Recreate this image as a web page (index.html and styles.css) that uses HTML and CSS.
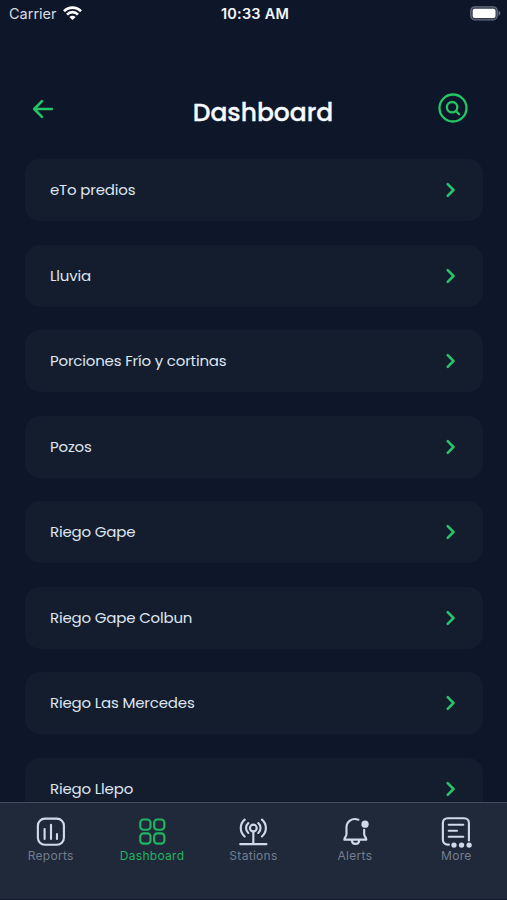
FILE: index.html
```html
<!DOCTYPE html>
<html lang="en">
<head>
<meta charset="utf-8">
<title>Dashboard</title>
<link rel="stylesheet" href="styles.css">
</head>
<body>
<div class="app">
  <div class="status">
    <div class="carrier"><span>Carrier</span>
      <svg width="19" height="14" viewBox="0 0 19 14" fill="none" stroke="#fff" stroke-width="2.7"><path d="M1 5.2C5.8.4 13.2.4 18 5.2M4 8.6c3.1-3.2 7.9-3.2 11 0"/><path d="M9.5 14 6.4 10.9c1.7-1.7 4.5-1.7 6.2 0z" fill="#fff" stroke="none"/></svg>
    </div>
    <div class="clock">10:33 AM</div>
    <svg class="battery" width="31" height="15" viewBox="0 0 31 15"><rect x=".8" y=".8" width="26.4" height="13" rx="4" fill="#30384a" stroke="#666c7b" stroke-width="1.3"/><rect x="2.7" y="2.7" width="22.8" height="9.2" rx="2" fill="#fff"/><path d="M28.5 4.8c2.5 1 2.5 4 0 5z" fill="#666c7b"/></svg>
  </div>
  <header class="header">
    <svg class="back" width="22" height="20" viewBox="0 0 22 20"><path d="M10 2.2 2.2 10l7.8 7.8M2.6 10h17.3"/></svg>
    <h1>Dashboard</h1>
    <svg class="search" width="30" height="30" viewBox="0 0 30 30"><circle cx="15" cy="15" r="13.5"/><circle cx="14.1" cy="14.2" r="5.2"/><path d="m17.9 18 3.2 3.2"/></svg>
  </header>
  <main class="list">
    <div class="card"><span>eTo predios</span><svg class="chevron" viewBox="0 0 10 16"><path d="m1.7 2.2 5.8 5.8-5.8 5.8"/></svg></div>
    <div class="card"><span>Lluvia</span><svg class="chevron" viewBox="0 0 10 16"><path d="m1.7 2.2 5.8 5.8-5.8 5.8"/></svg></div>
    <div class="card"><span>Porciones Frío y cortinas</span><svg class="chevron" viewBox="0 0 10 16"><path d="m1.7 2.2 5.8 5.8-5.8 5.8"/></svg></div>
    <div class="card"><span>Pozos</span><svg class="chevron" viewBox="0 0 10 16"><path d="m1.7 2.2 5.8 5.8-5.8 5.8"/></svg></div>
    <div class="card"><span>Riego Gape</span><svg class="chevron" viewBox="0 0 10 16"><path d="m1.7 2.2 5.8 5.8-5.8 5.8"/></svg></div>
    <div class="card"><span>Riego Gape Colbun</span><svg class="chevron" viewBox="0 0 10 16"><path d="m1.7 2.2 5.8 5.8-5.8 5.8"/></svg></div>
    <div class="card"><span>Riego Las Mercedes</span><svg class="chevron" viewBox="0 0 10 16"><path d="m1.7 2.2 5.8 5.8-5.8 5.8"/></svg></div>
    <div class="card"><span>Riego Llepo</span><svg class="chevron" viewBox="0 0 10 16"><path d="m1.7 2.2 5.8 5.8-5.8 5.8"/></svg></div>
  </main>
  <nav class="tabs">
    <div class="tab"><svg viewBox="0 0 30 30"><rect x="2.7" y="2.5" width="24.4" height="24.4" rx="6.5"/><path d="M9 12.2v9.4M15 8.3v13.3M20.6 17v4.6"/></svg><span>Reports</span></div>
    <div class="tab active"><svg viewBox="0 0 30 30"><rect x="4" y="3.3" width="9.6" height="9.6" rx="3"/><rect x="17" y="3.3" width="9.6" height="9.6" rx="3"/><rect x="4" y="16.3" width="9.6" height="9.6" rx="3"/><rect x="17" y="16.3" width="9.6" height="9.6" rx="3"/></svg><span>Dashboard</span></div>
    <div class="tab"><svg viewBox="0 0 30 30"><circle cx="15.3" cy="11.3" r="3.2"/><path d="M15.3 14.7v11.5M3 26.4h24.6M7.2 3.4c-4.9 4.2-4.9 11.6 0 15.8M23.4 3.4c4.9 4.2 4.9 11.6 0 15.8M10.6 6.7c-2.8 2.5-2.8 6.7 0 9.2M20 6.7c2.8 2.5 2.8 6.7 0 9.2"/></svg><span>Stations</span></div>
    <div class="tab"><svg viewBox="0 0 30 30"><path d="M18.2 3.5C12 1.2 7 5.4 7 10.8V17c0 2.1-2 3.1-2 5.2h20.6c0-2.1-2-3.1-2-5.2v-4.1M12 22.8c.4 4.5 6.6 4.5 7 0"/><circle class="dot" cx="24.4" cy="7.7" r="3.4"/></svg><span>Alerts</span></div>
    <div class="tab"><svg viewBox="0 0 30 30"><path d="M8.4 26.8H7.1A4.4 4.4 0 0 1 2.7 22.4V6.5A4.4 4.4 0 0 1 7.1 2.1h15.6a4.4 4.4 0 0 1 4.4 4.4v16.4M8.2 8.2h13.6M8.2 13.8h7.7M8.2 19.4h13.6"/><g class="dot"><circle cx="13.1" cy="27.3" r="2.5"/><circle cx="20.2" cy="27.3" r="2.5"/><circle cx="27.3" cy="27.3" r="2.5"/></g></svg><span>More</span></div>
  </nav>
</div>
</body>
</html>
```
FILE: styles.css
```css
* { box-sizing: border-box; }
body { margin: 0; background: #0e172a; }
.app {
  width: 507px;
  height: 900px;
  display: flex;
  flex-direction: column;
  overflow: hidden;
  color: #dfe6f1;
  font-family: Poppins, Inter, sans-serif;
}
.status {
  height: 28px;
  flex: none;
  display: grid;
  grid-template-columns: 1fr auto 1fr;
  align-items: center;
  padding: 0 6px 0 9px;
  font: 14.5px/28px Inter, sans-serif;
}
.carrier { display: flex; align-items: center; gap: 6px; color: #d7dbe3; }
.carrier svg { margin-top: -2px; }
.clock { font-weight: 600; font-size: 14.5px; letter-spacing: .2px; color: #f6f7fa; }
.battery { justify-self: end; margin-top: -2px; }
.header {
  height: 131px;
  flex: none;
  display: grid;
  grid-template-columns: 1fr auto 1fr;
  align-items: center;
  padding: 32px 39px 0 32px;
}
.header svg { fill: none; stroke: #24c565; stroke-width: 2.6; stroke-linecap: round; stroke-linejoin: round; margin-top: -2px; }
.header .search { justify-self: end; stroke-width: 2.3; margin-top: -3px; }
h1 { margin: 6px -13px 0 13px; font-size: 25px; line-height: 38px; font-weight: 500; color: #f7faff; -webkit-text-stroke: .3px #f7faff; }
.list {
  flex: 1;
  min-height: 0;
  overflow: hidden;
  display: flex;
  flex-direction: column;
  gap: 23.5px;
  padding: 0 24px 0 25px;
}
.card {
  height: 62px;
  flex: none;
  display: flex;
  align-items: center;
  justify-content: space-between;
  padding: 0 27px 0 25px;
  border-radius: 15px;
  background: #141d2e;
  font-size: 15px;
  line-height: 24px;
  letter-spacing: -.18px;
  white-space: nowrap;
}
.chevron { width: 10px; height: 16px; fill: none; stroke: #27c46a; stroke-width: 2.5; stroke-linecap: round; stroke-linejoin: round; }
.tabs {
  height: 98px;
  flex: none;
  display: grid;
  grid-template-columns: repeat(5, 1fr);
  padding-top: 13px;
  border-top: 1.5px solid #414b5c;
  border-bottom: 1px solid #111a2c;
  background: #1f293a;
}
.tab { display: flex; flex-direction: column; align-items: center; color: #747e8d; font: 12px/16px Inter, sans-serif; letter-spacing: .3px; }
.tab svg { width: 32px; height: 32px; fill: none; stroke: #d0d9e7; stroke-width: 2; stroke-linecap: round; stroke-linejoin: round; overflow: visible; }
.tab .dot { fill: #d0d9e7; stroke: none; }
.tab.active { color: #22b461; }
.tab.active svg { stroke: #22b461; }
```
